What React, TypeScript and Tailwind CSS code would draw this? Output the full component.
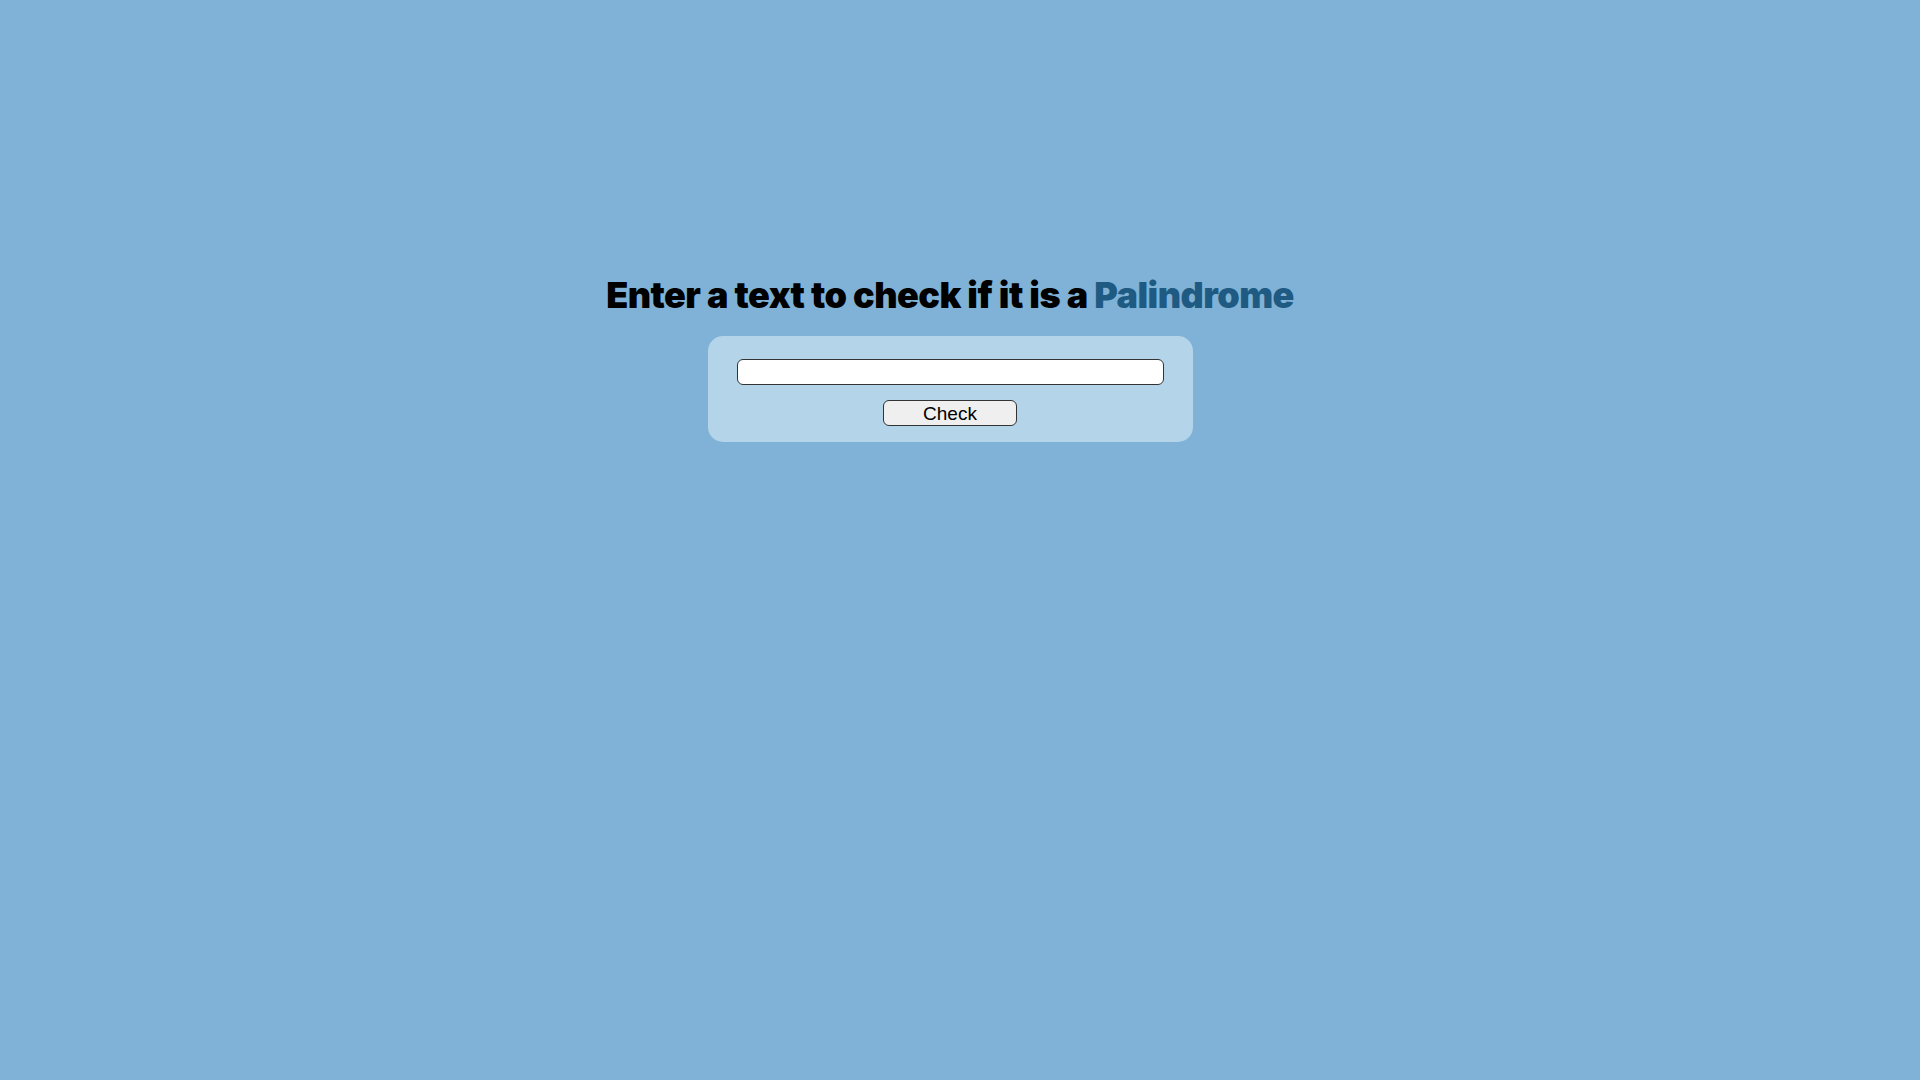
export default function App() {
  return (
    <main className="flex min-h-screen flex-col items-center bg-[#7fb2d6] pr-[20px] pt-[273px] font-['Inter',sans-serif]">
      <h1 className="text-[36px] font-black leading-[44px] tracking-[-0.015em] text-black">
        Enter a text to check if it is a <span className="text-[#1e5a82]">Palindrome</span>
      </h1>
      <div className="mt-[19px] flex w-[485px] flex-col items-center rounded-[15px] bg-[#b4d4ea] px-[29px] pb-[16px] pt-[23px]">
        <input
          type="text"
          className="h-[26px] w-full rounded-[6px] border-[1.5px] border-[#333] bg-white px-2 font-['Liberation_Sans',sans-serif] text-base outline-none"
        />
        <button className="mt-[15px] h-[26px] w-[134px] rounded-[6px] border-[1.5px] border-[#333] bg-[#efefef] font-['Liberation_Sans',sans-serif] text-[19px] leading-none text-black">
          Check
        </button>
      </div>
    </main>
  );
}
